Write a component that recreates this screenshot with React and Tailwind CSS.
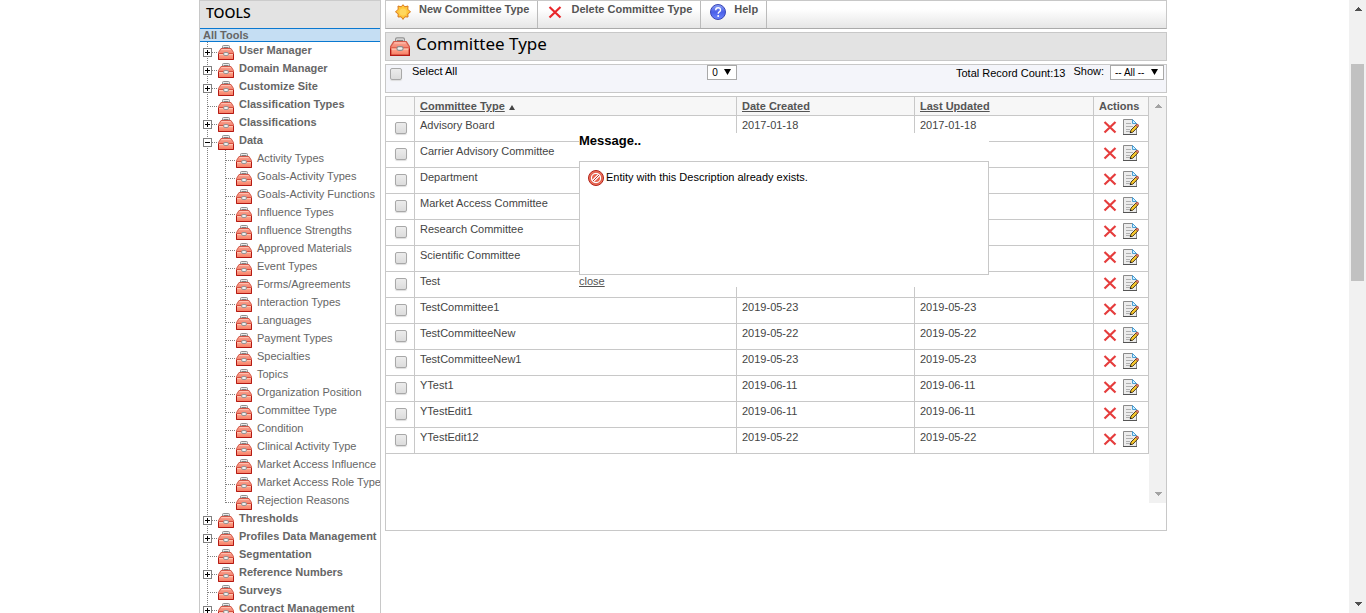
import React from "react";

const tools = [
  { name: "User Manager", sign: "+" },
  { name: "Domain Manager", sign: "+" },
  { name: "Customize Site", sign: "+" },
  { name: "Classification Types" },
  { name: "Classifications", sign: "+" },
  {
    name: "Data",
    sign: "-",
    children: [
      "Activity Types",
      "Goals-Activity Types",
      "Goals-Activity Functions",
      "Influence Types",
      "Influence Strengths",
      "Approved Materials",
      "Event Types",
      "Forms/Agreements",
      "Interaction Types",
      "Languages",
      "Payment Types",
      "Specialties",
      "Topics",
      "Organization Position",
      "Committee Type",
      "Condition",
      "Clinical Activity Type",
      "Market Access Influence",
      "Market Access Role Type",
      "Rejection Reasons",
    ],
  },
  { name: "Thresholds", sign: "+" },
  { name: "Profiles Data Management", sign: "+" },
  { name: "Segmentation" },
  { name: "Reference Numbers", sign: "+" },
  { name: "Surveys" },
  { name: "Contract Management", sign: "+" },
];

const committees = [
  ["Advisory Board", "2017-01-18", "2017-01-18"],
  ["Carrier Advisory Committee", "", ""],
  ["Department", "", ""],
  ["Market Access Committee", "", ""],
  ["Research Committee", "", ""],
  ["Scientific Committee", "", ""],
  ["Test", "", ""],
  ["TestCommittee1", "2019-05-23", "2019-05-23"],
  ["TestCommitteeNew", "2019-05-22", "2019-05-22"],
  ["TestCommitteeNew1", "2019-05-23", "2019-05-23"],
  ["YTest1", "2019-06-11", "2019-06-11"],
  ["YTestEdit1", "2019-06-11", "2019-06-11"],
  ["YTestEdit12", "2019-05-22", "2019-05-22"],
];

function Toolbox({ className }) {
  return (
    <svg viewBox="0 0 16 16" className={className} aria-hidden="true">
      <path d="M4.500 5V2.500q0-1 1-1h5q1 0 1 1V5z" fill="#ececec" stroke="#909090" strokeWidth="1" />
      <path d="M5.500 3.500h5" stroke="#808080" strokeWidth="1" />
      <path d="M3 4.500h10l2.500 4v7H.5v-7z" fill="url(#boxBody)" stroke="#d2594a" strokeWidth="1" strokeLinejoin="round" />
      <path d="M3.500 5.500h9" stroke="#ffc0b0" strokeWidth="1" />
      <path d="M1 9.500h14" stroke="#d8503f" strokeWidth="1" />
      <path d="M1 10.500h14" stroke="#ffc4b0" strokeWidth="1" />
      <path d="M.5 10v5.500h15V10" fill="none" stroke="#b41a14" strokeWidth="1" />
      <rect x="5.500" y="8.500" width="5" height="3" rx="1.500" fill="#f0f0f0" stroke="#8c8c8c" strokeWidth="0.900" />
    </svg>
  );
}

function Cross({ className, color = "#e8262a" }) {
  return (
    <svg viewBox="0 0 16 16" className={className} aria-hidden="true">
      <path d="M2.500 3l11 10.500M13.500 3l-11 10.500" stroke={color} strokeWidth="2.200" />
    </svg>
  );
}

function EditNote() {
  return (
    <svg viewBox="0 0 16 16" className="size-4" aria-hidden="true">
      <path d="M.5.500H9.500L13.500 4.500v11H.5z" fill="#ececec" stroke="#8a8a8a" />
      <path d="M0 15.500h14" stroke="#555" />
      <path d="M9.500.500l4 4h-4z" fill="#d4efff" stroke="#4a9fd4" />
      <path d="M3 4.500h5M3 7.500h7M3 10.500h4M3 12.500h4" stroke="#b0b0b0" />
      <path d="M7.300 13.600l.7-2.600 5-5 2 1.800-5.200 5.400z" fill="#f8c82c" stroke="#3c2c10" strokeWidth="0.900" />
      <path d="M12.600 6.300l1.200-1.200q1.900.200 1.900 1.900l-1.100 1.100z" fill="#e88a7a" stroke="#8a2a20" strokeWidth="0.600" />
      <path d="M6.800 14.200l.5-1.800 1.300 1.200z" fill="#111" />
    </svg>
  );
}

function Star() {
  return (
    <svg viewBox="0 0 16 16" className="size-4" aria-hidden="true">
      <path
        d="M8 .7l1.800 2.100 3.200-.8-.2 3.200L15.500 8l-2.700 1.800.2 3.200-3.200-.2L8 15.400l-1.800-2.600-3.200.2.200-3.200L.5 8l2.700-2.800L3 2l3.200.8z"
        fill="#ffc83c"
        stroke="#d97a1a"
        strokeLinejoin="round"
      />
      <circle cx="8" cy="8" r="3.500" fill="#ffd75e" />
    </svg>
  );
}

function HelpBall() {
  return (
    <svg viewBox="0 0 16 16" className="size-4" aria-hidden="true">
      <circle cx="8" cy="8" r="7.500" fill="url(#helpFill)" stroke="#3c48b4" />
      <path d="M5.700 6.200q0-2.500 2.400-2.500t2.400 2.200q0 1.200-1.200 1.900Q8.200 8.500 8.200 9.800" fill="none" stroke="#fff" strokeWidth="1.400" />
      <circle cx="8.200" cy="12" r="1" fill="#fff" />
    </svg>
  );
}

function NoEntry() {
  return (
    <svg viewBox="0 0 16 16" className="size-4 shrink-0" aria-hidden="true">
      <circle cx="8" cy="8" r="7.500" fill="#f0705a" stroke="#b0241c" />
      <circle cx="8" cy="8" r="4.700" fill="#e8644e" stroke="#fff" strokeWidth="1.400" />
      <path d="M4.700 11.300l6.600-6.600" stroke="#fff" strokeWidth="3" />
      <path d="M5 11l6-6" stroke="#c03428" strokeWidth="1" />
      <circle cx="8" cy="8" r="5.600" fill="none" stroke="#c23a2c" strokeWidth="0.500" />
    </svg>
  );
}

function Guide({ branch, end, sign }) {
  return (
    <svg viewBox="0 0 18 18" className="h-[18px] w-[18px] shrink-0" shapeRendering="crispEdges" aria-hidden="true">
      <path d={end ? "M7.500 0V10.500" : "M7.500 0V18"} stroke="#808080" strokeDasharray="1 1" />
      {branch && <path d="M8 10.500H18" stroke="#808080" strokeDasharray="1 1" />}
      {sign && <rect x="3.500" y="6.500" width="8" height="8" fill="#fff" stroke="#808080" />}
      {sign && <path d="M5 10.500h5" stroke="#000" />}
      {sign === "+" && <path d="M7.500 8v5" stroke="#000" />}
    </svg>
  );
}

function Leaf({ name, bold }) {
  return (
    <a href="#" className={"flex min-w-0 gap-[5px] whitespace-nowrap leading-4 text-[#666]" + (bold ? " font-bold" : "")}>
      <Toolbox className="mt-[2px] h-4 w-4 shrink-0" />
      {name}
    </a>
  );
}

function Triangle({ up, color }) {
  return (
    <svg viewBox="0 0 8 4" className="h-1 w-2" shapeRendering="crispEdges" aria-hidden="true">
      <path d={up ? "M0 4L4 0l4 4z" : "M0 0h8L4 4z"} fill={color} />
    </svg>
  );
}

function Check({ label, className }) {
  return (
    <input
      type="checkbox"
      aria-label={label}
      className={
        "block size-3 shrink-0 appearance-none rounded-[2px] border border-[#a8a8a8] bg-linear-to-b from-[#ececec] to-[#dcdcdc] shadow-[0_1px_1px_#ddd] checked:bg-[#777] " +
        (className || "")
      }
    />
  );
}

function Picker({ label, value, className }) {
  return (
    <span className={"relative block h-[15px] " + className}>
      <select aria-label={label} className="block h-full w-full appearance-none border border-[#a9a9a9] bg-white pl-1 text-[10px] leading-3 text-black">
        <option>{value}</option>
      </select>
      <svg viewBox="0 0 7 6" className="pointer-events-none absolute top-1 right-1.5 h-1.5 w-[7px]" aria-hidden="true">
        <path d="M0 0h7L3.500 6z" fill="#000" />
      </svg>
    </span>
  );
}

function ToolButton({ icon, children }) {
  return (
    <button type="button" className="flex gap-2 border-r border-[#bbb] pt-[1px] pr-2 pb-2 pl-[9px] font-bold text-[#555]">
      <span className="block pt-[2px]">{icon}</span>
      <span className="leading-[14px]">{children}</span>
    </button>
  );
}

export default function App() {
  return (
    <div className="flex h-screen overflow-hidden bg-white pl-[17px] font-['Liberation_Sans',Arial,sans-serif] text-[11px] leading-[14px] text-[#444]">
      <svg className="absolute size-0" aria-hidden="true">
        <defs>
          <linearGradient id="boxBody" x1="0" y1="0" x2="0" y2="1">
            <stop offset="0" stopColor="#fba794" />
            <stop offset="0.400" stopColor="#f48672" />
            <stop offset="0.500" stopColor="#ffab94" />
            <stop offset="1" stopColor="#f67a60" />
          </linearGradient>
          <linearGradient id="helpFill" x1="0" y1="0" x2="0" y2="1">
            <stop offset="0" stopColor="#8ea4f8" />
            <stop offset="0.500" stopColor="#4a5fe8" />
            <stop offset="1" stopColor="#6c86ff" />
          </linearGradient>
        </defs>
      </svg>

      <div className="mx-auto flex w-full max-w-[968px] gap-1">
        <nav className="w-[182px] shrink-0 overflow-hidden border-x border-[#c8c8c8]">
          <h2 className="border-t border-[#ccc] bg-[#e3e3e3] px-1.5 pt-[2px] pb-[5px] font-['Noto_Sans',sans-serif] text-[14px] leading-5 font-medium text-black">
            TOOLS
          </h2>
          <a href="#" className="block border-y border-[#0a78d0] bg-[#c5def3] px-[3px] leading-3 font-bold text-[#666]">
            All Tools
          </a>
          <ul>
            {tools.map((tool) => (
              <li key={tool.name}>
                <div className="flex h-[18px]">
                  <Guide branch sign={tool.sign} />
                  <Leaf name={tool.name} bold />
                </div>
                {tool.children && (
                  <ul>
                    {tool.children.map((child, i) => (
                      <li key={child} className="flex h-[18px]">
                        <Guide />
                        <Guide branch end={i === tool.children.length - 1} />
                        <Leaf name={child} />
                      </li>
                    ))}
                  </ul>
                )}
              </li>
            ))}
          </ul>
        </nav>

        <main className="relative flex min-w-0 flex-1 flex-col gap-[3px]">
          <div className="flex border border-[#c8c8c8] border-b-[#aaa] bg-linear-to-b from-white from-30% to-[#e6e6e6]">
            <ToolButton icon={<Star />}>New Committee Type</ToolButton>
            <ToolButton icon={<Cross className="size-4" />}>Delete Committee Type</ToolButton>
            <ToolButton icon={<HelpBall />}>Help</ToolButton>
          </div>

          <header className="flex gap-1.5 border border-[#c8c8c8] bg-[#e3e3e3] pb-1 pl-1">
            <Toolbox className="mt-[3px] size-5" />
            <h1 className="font-['Noto_Sans',sans-serif] text-[17px] leading-[22px] text-black">Committee Type</h1>
          </header>

          <div className="flex items-start border border-[#c8c8c8] bg-[#f4f5fa] pr-[2px] pb-3 pl-1 text-black">
            <label className="flex w-[41%] shrink-0 gap-[10px] leading-3">
              <Check label="Select All" className="mt-[3px]" />
              Select All
            </label>
            <Picker label="Page" value="0" className="w-[30px]" />
            <div className="flex flex-1 justify-end">
              <span className="mr-2 pt-[1px]">Total Record Count:13</span>
              <span className="mr-1.5 leading-3">Show:</span>
              <Picker label="Show" value="-- All --" className="w-[54px]" />
            </div>
          </div>

          <section className="border border-[#c8c8c8] pb-[27px]">
            <div className="flex min-h-[406px]">
              <div className="min-w-0 flex-1">
                <table className="w-full table-fixed border-separate border-spacing-0">
                  <thead>
                    <tr className="h-[19px] bg-[#f7f7f7] text-left text-[#555] [&>th]:border-r [&>th]:border-b [&>th]:border-[#c8c8c8] [&>th]:px-[5px]">
                      <th className="w-[29px]" aria-label="Selected" />
                      <th>
                        <a href="#" className="underline">Committee Type</a>
                        <svg viewBox="0 0 6 5" className="ml-1 inline h-[5px] w-1.5" aria-hidden="true">
                          <path d="M0 5L3 0l3 5z" fill="#444" />
                        </svg>
                      </th>
                      <th className="w-[178px]"><a href="#" className="underline">Date Created</a></th>
                      <th className="w-[179px]"><a href="#" className="underline">Last Updated</a></th>
                      <th className="w-[55px]">Actions</th>
                    </tr>
                  </thead>
                  <tbody>
                    {committees.map(([name, created, updated]) => (
                      <tr key={name} className="h-[26px] align-top [&>td]:border-r [&>td]:border-b [&>td]:border-[#c8c8c8] [&>td]:px-[5px] [&>td]:pt-[2px]">
                        <td>
                          <Check label={name} className="mt-1 ml-1" />
                        </td>
                        <td>{name}</td>
                        <td>{created}</td>
                        <td>{updated}</td>
                        <td>
                          <div className="flex gap-[5px] pt-[1px] pl-[3px]">
                            <button type="button" aria-label={"Delete " + name}>
                              <Cross className="size-4" color="#e53c3c" />
                            </button>
                            <button type="button" aria-label={"Edit " + name}>
                              <EditNote />
                            </button>
                          </div>
                        </td>
                      </tr>
                    ))}
                  </tbody>
                </table>
              </div>
              <div className="flex w-[17px] flex-col items-center justify-between bg-[#f1f1f1] py-[7px]" aria-hidden="true">
                <Triangle up color="#a3a3a3" />
                <Triangle color="#a3a3a3" />
              </div>
            </div>
          </section>

          <div role="dialog" aria-label="Message" className="absolute top-[133px] left-[194px] w-[410px] bg-white text-black">
            <h2 className="pb-3 text-[13px] leading-4 font-bold">Message..</h2>
            <div className="flex min-h-[114px] gap-[2px] border border-[#c8c8c8] px-2 py-2">
              <NoEntry />
              <p>Entity with this Description already exists.</p>
            </div>
            <button type="button" className="block leading-3 text-[#555] underline">close</button>
          </div>
        </main>
      </div>

      <div className="flex w-[17px] shrink-0 flex-col items-center bg-[#f1f1f1] py-[7px]" aria-hidden="true">
        <Triangle up color="#505050" />
        <div className="mt-[53px] mb-auto h-[217px] w-[13px] bg-[#c1c1c1]" />
        <Triangle color="#505050" />
      </div>
    </div>
  );
}
